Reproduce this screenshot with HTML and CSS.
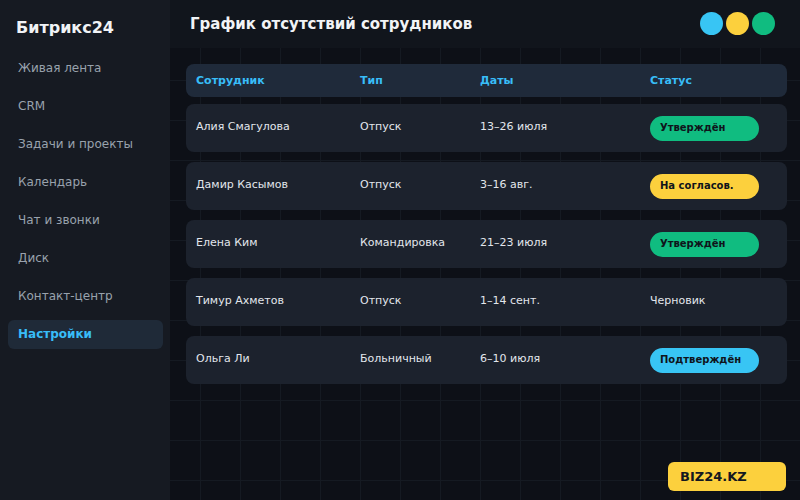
FILE: index.html
```html
<!DOCTYPE html>
<html lang="ru">
<head>
  <meta charset="UTF-8" />
  <title>График отсутствий</title>
  <link rel="stylesheet" href="styles.css">
</head>
<body>
  <aside class="sidebar">
    <div class="brand">Битрикс24</div>
    <nav class="nav">
      <div class="nav-item">Живая лента</div>
      <div class="nav-item">CRM</div>
      <div class="nav-item">Задачи и проекты</div>
      <div class="nav-item">Календарь</div>
      <div class="nav-item">Чат и звонки</div>
      <div class="nav-item">Диск</div>
      <div class="nav-item">Контакт-центр</div>
      <div class="nav-item active">Настройки</div>
    </nav>
  </aside>
  <main class="main">
    <header class="topbar">
      <h1>График отсутствий сотрудников</h1>
      <div class="dots">
        <span class="dot sky"></span>
        <span class="dot yellow"></span>
        <span class="dot green"></span>
      </div>
    </header>
    <section class="content">
      <div class="row head">
        <div>Сотрудник</div>
        <div>Тип</div>
        <div>Даты</div>
        <div>Статус</div>
      </div>
      <div class="row">
        <div>Алия Смагулова</div>
        <div>Отпуск</div>
        <div>13–26 июля</div>
        <div><span class="badge green">Утверждён</span></div>
      </div>
      <div class="row">
        <div>Дамир Касымов</div>
        <div>Отпуск</div>
        <div>3–16 авг.</div>
        <div><span class="badge yellow">На согласов.</span></div>
      </div>
      <div class="row">
        <div>Елена Ким</div>
        <div>Командировка</div>
        <div>21–23 июля</div>
        <div><span class="badge green">Утверждён</span></div>
      </div>
      <div class="row">
        <div>Тимур Ахметов</div>
        <div>Отпуск</div>
        <div>1–14 сент.</div>
        <div>Черновик</div>
      </div>
      <div class="row">
        <div>Ольга Ли</div>
        <div>Больничный</div>
        <div>6–10 июля</div>
        <div><span class="badge sky">Подтверждён</span></div>
      </div>
    </section>
  </main>
  <div class="logo">BIZ24.KZ</div>
</body>
</html>
```

FILE: styles.css
```css
html, body {
  height: 100%;
}
body {
  margin: 0;
  font-family: "DejaVu Sans", sans-serif;
  background-color: #0d1017;
  background-image:
    linear-gradient(to right, #151a22 1px, transparent 1px),
    linear-gradient(to bottom, #151a22 1px, transparent 1px);
  background-size: 40px 40px;
  display: flex;
  color: #e2e6ec;
  overflow: hidden;
}
.sidebar {
  width: 170px;
  flex-shrink: 0;
  background: #161a22;
  padding: 0 7px 0 8px;
  box-sizing: border-box;
}
.brand {
  font-size: 16px;
  font-weight: bold;
  color: #f1f3f6;
  padding: 18px 0 0 8px;
  height: 35px;
}
.nav {
  display: flex;
  flex-direction: column;
  gap: 8px;
}
.nav-item {
  height: 30px;
  line-height: 30px;
  padding-left: 10px;
  font-size: 12px;
  color: #99a2ad;
  border-radius: 6px;
}
.nav-item.active {
  margin-top: 1px;
  background: #1f2a38;
  color: #38bdf8;
  font-weight: bold;
  height: 29px;
  line-height: 29px;
}
.main {
  flex: 1;
  display: flex;
  flex-direction: column;
}
.topbar {
  height: 48px;
  background: #11151c;
  display: flex;
  align-items: center;
  justify-content: space-between;
  padding: 0 25px 1px 20px;
  box-sizing: border-box;
}
.topbar h1 {
  margin: 0;
  font-size: 15px;
  font-weight: bold;
  color: #f1f3f6;
}
.dots {
  display: flex;
  gap: 3px;
}
.dot {
  width: 23px;
  height: 23px;
  border-radius: 50%;
}
.dot.sky { background: #38c5f4; }
.dot.yellow { background: #fcd03d; }
.dot.green { background: #10bc80; }
.content {
  padding: 16px 13px 0 16px;
  display: flex;
  flex-direction: column;
  gap: 10px;
}
.row {
  display: grid;
  grid-template-columns: 164px 120px 170px 1fr;
  align-items: center;
  height: 48px;
  box-sizing: border-box;
  padding: 0 0 3px 10px;
  background: #1c222d;
  border-radius: 8px;
  font-size: 11px;
  color: #e2e6ec;
}
.row.head {
  height: 33px;
  padding-bottom: 1px;
  margin-bottom: -3px;
  background: #1f2a3a;
  color: #38bdf8;
  font-weight: bold;
}
.badge {
  display: inline-block;
  width: 109px;
  height: 25px;
  line-height: 23px;
  box-sizing: border-box;
  padding-left: 10px;
  border-radius: 12.5px;
  font-size: 10px;
  font-weight: bold;
  color: #0f141b;
  margin-top: 4px;
  vertical-align: top;
}
.badge.green { background: #10bc80; }
.badge.yellow { background: #fcd03d; }
.badge.sky { background: #38c5f4; }
.logo {
  position: absolute;
  right: 14px;
  bottom: 9px;
  width: 118px;
  height: 29px;
  line-height: 29px;
  box-sizing: border-box;
  padding-left: 12px;
  background: #fcd03d;
  color: #141820;
  font-size: 13px;
  font-weight: bold;
  border-radius: 6px;
}
```
